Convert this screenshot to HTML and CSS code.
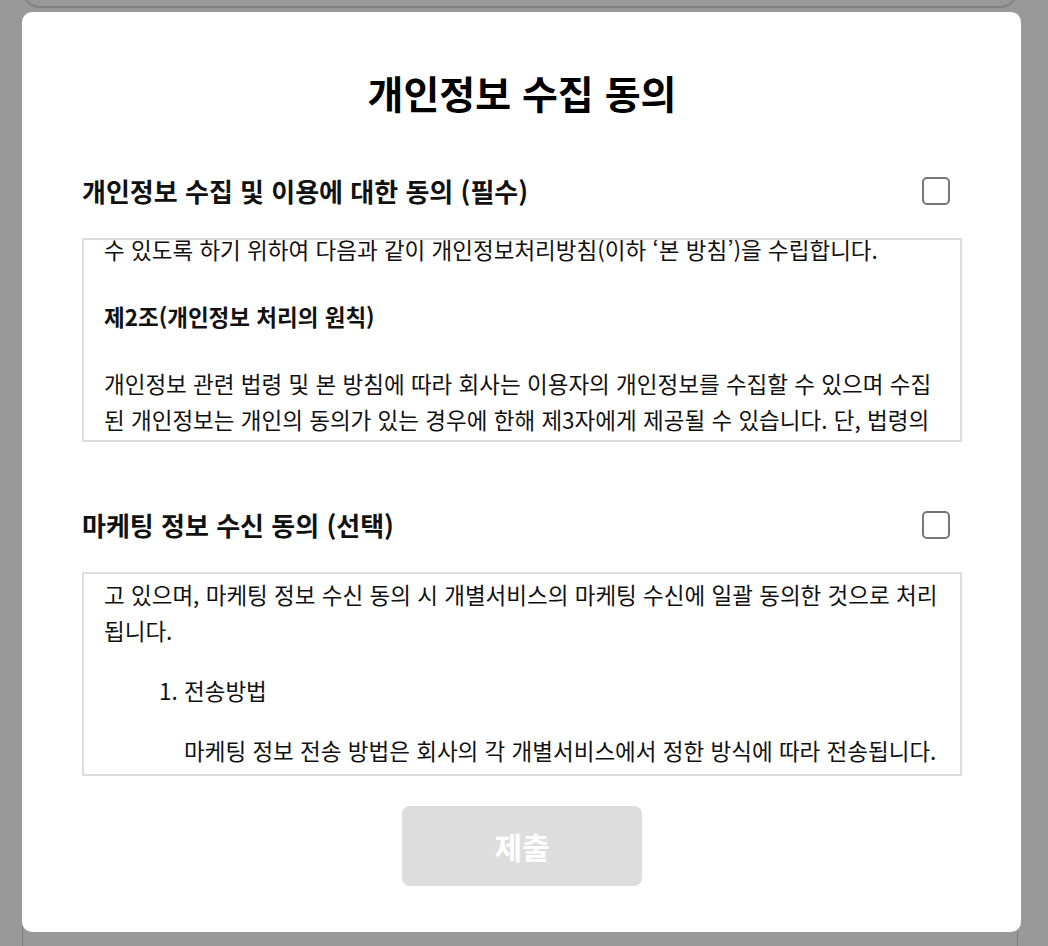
FILE: index.html
```html
<!DOCTYPE html>
<html lang="ko">
<head>
<meta charset="utf-8">
<title>개인정보 수집 동의</title>
<link rel="stylesheet" href="styles.css">
</head>
<body>
<div class="page">
  <div class="page-card page-card-top"></div>
  <div class="page-card page-card-bottom"></div>
</div>
<div class="overlay">
  <div class="modal">
    <h1 class="modal-title">개인정보 수집 동의</h1>

    <div class="section-row">
      <h2 class="section-title">개인정보 수집 및 이용에 대한 동의 (필수)</h2>
      <input type="checkbox" class="check" aria-label="개인정보 수집 및 이용에 대한 동의">
    </div>
    <div class="terms-box">
      <div class="terms-content terms-content-1">
        <p class="para">수 있도록 하기 위하여 다음과 같이 개인정보처리방침(이하 ‘본 방침’)을 수립합니다.</p>
        <p class="para para-strong">제2조(개인정보 처리의 원칙)</p>
        <p class="para">개인정보 관련 법령 및 본 방침에 따라 회사는 이용자의 개인정보를 수집할 수 있으며 수집된 개인정보는 개인의 동의가 있는 경우에 한해 제3자에게 제공될 수 있습니다. 단, 법령의 규정 등에 의해 적법하게 강제되는 경우 회사는 수집한 이용자의 개인정보를 사전에 개인의 동의 없이 제3자에게 제공할 수도 있습니다.</p>
      </div>
    </div>

    <div class="section-row section-row-2">
      <h2 class="section-title">마케팅 정보 수신 동의 (선택)</h2>
      <input type="checkbox" class="check" aria-label="마케팅 정보 수신 동의">
    </div>
    <div class="terms-box">
      <div class="terms-content terms-content-2">
        <p class="para para-tight">고 있으며, 마케팅 정보 수신 동의 시 개별서비스의 마케팅 수신에 일괄 동의한 것으로 처리됩니다.</p>
        <ol class="terms-list">
          <li>
            <p class="list-head">전송방법</p>
            <p class="list-body">마케팅 정보 전송 방법은 회사의 각 개별서비스에서 정한 방식에 따라 전송됩니다.</p>
          </li>
          <li>
            <p class="list-head">전송내용</p>
            <p class="list-body">발송되는 마케팅 정보는 수신자에게 회사 및 제3자의 상품 또는 서비스에 대한 혜택 정보, 이벤트 정보 등이 포함됩니다.</p>
          </li>
        </ol>
      </div>
    </div>

    <div class="actions">
      <button type="button" class="submit" disabled>제출</button>
    </div>
  </div>
</div>
</body>
</html>
```

FILE: styles.css
```css
* { box-sizing: border-box; }

html, body {
  margin: 0;
  padding: 0;
  height: 100%;
}

body {
  background: #ffffff;
  font-family: "Noto Sans CJK KR", "Noto Sans", sans-serif;
  color: #000;
  overflow: hidden;
}

.page {
  display: flex;
  flex-direction: column;
  align-items: center;
  height: 100%;
}

.page-card {
  background: #fff;
  border: 1px solid #d4d4d4;
  width: 996px;
  margin-left: -8px;
}

.page-card-top {
  height: 26px;
  margin-top: -19px;
  border-radius: 0 0 18px 18px;
  box-shadow: 0 1px 1px #d0d0d0;
}

.page-card-bottom {
  flex: 1;
  margin-top: 906px;
  border-bottom: none;
}

.overlay {
  position: fixed;
  inset: 0;
  background: rgba(0, 0, 0, 0.4);
  display: flex;
  align-items: flex-start;
  padding: 12px 0 0 22px;
}

.modal {
  width: 999px;
  height: 920px;
  background: #fff;
  border-radius: 10px;
  padding: 57px 59px 0 60px;
  display: flex;
  flex-direction: column;
}

.modal-title {
  margin: 0;
  font-size: 39px;
  font-weight: 700;
  line-height: 46px;
  text-align: center;
  color: #000;
}

.section-row {
  display: flex;
  align-items: center;
  justify-content: space-between;
  height: 28px;
  margin-top: 62px;
  padding-right: 12px;
}

.section-row-2 {
  margin-top: 69px;
}

.section-title {
  margin: 0;
  font-size: 26px;
  font-weight: 700;
  line-height: 28px;
  color: #111;
}

.check {
  appearance: none;
  -webkit-appearance: none;
  margin: 0;
  width: 28px;
  height: 28px;
  border: 2px solid #767676;
  border-radius: 5px;
  background: #fff;
}

.terms-box {
  margin-top: 33px;
  height: 204px;
  border: 2px solid #dddddd;
  overflow: hidden;
  padding: 0 20px;
}

.terms-content {
  font-size: 22.5px;
  line-height: 36px;
  color: #111;
}

.terms-content-1 {
  margin-top: -9px;
}

.terms-content-2 {
  margin-top: 2px;
}

.para {
  margin: 0 0 31px;
}

.para-strong {
  font-weight: 700;
}

.para-tight {
  margin-bottom: 24px;
}

.terms-list {
  margin: 0;
  padding-left: 80px;
}

.terms-list li {
  margin: 0;
}

.list-head,
.list-body {
  margin: 0 0 24px;
}

.actions {
  display: flex;
  justify-content: center;
  margin-top: 30px;
}

.submit {
  width: 240px;
  height: 80px;
  border: none;
  border-radius: 8px;
  background: #dddddd;
  color: #fff;
  font-family: "Noto Sans CJK KR", "Noto Sans", sans-serif;
  font-size: 30px;
  font-weight: 700;
  cursor: default;
}
```
